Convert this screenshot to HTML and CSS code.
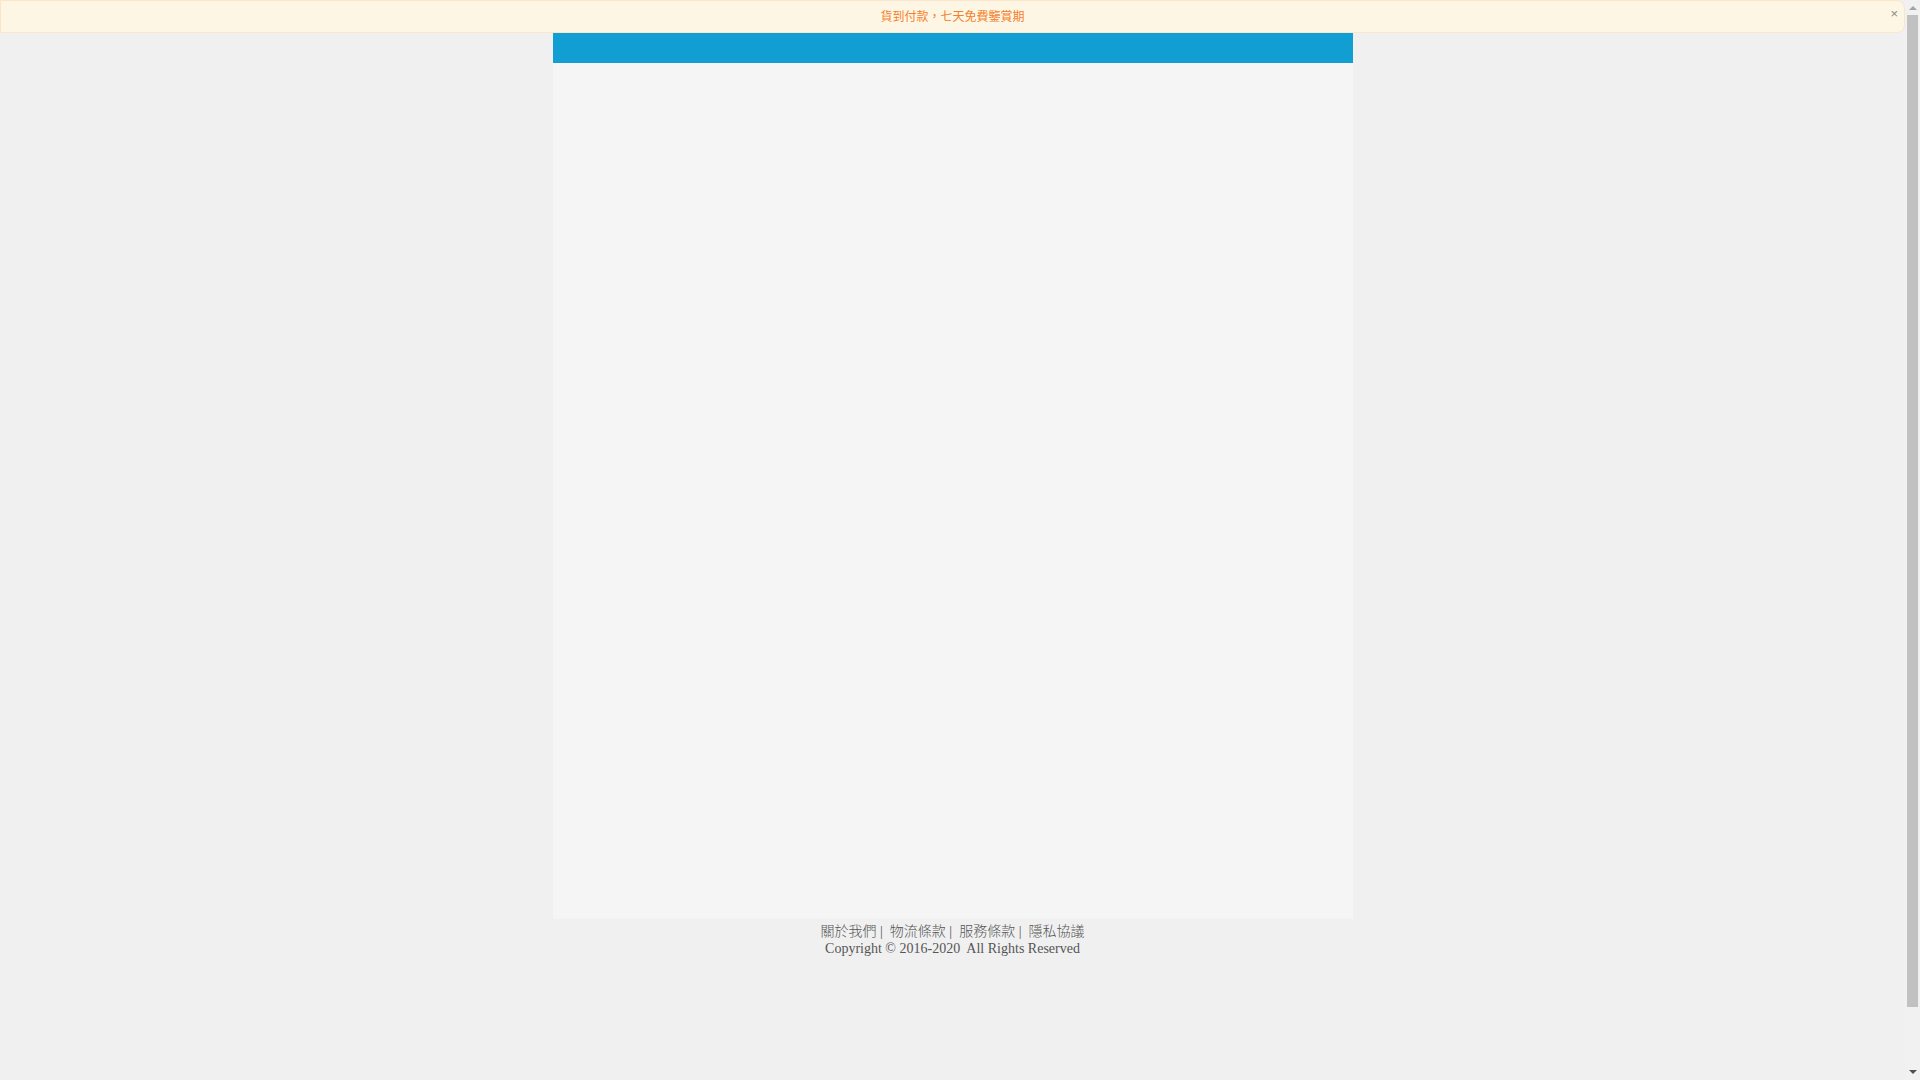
FILE: index.html
```html
<!DOCTYPE html>
<html lang="zh-Hant">
<head>
<meta charset="utf-8">
<title>貨到付款</title>
<link rel="stylesheet" href="styles.css">
</head>
<body>
<div class="notice">
  <span class="notice-text">貨到付款，七天免費鑒賞期</span>
  <span class="notice-close">×</span>
</div>
<div class="page">
  <div class="topbar"></div>
  <div class="content"></div>
</div>
<div class="footer">
  <div class="links"><a href="#">關於我們</a> | &nbsp;<a href="#">物流條款</a> | &nbsp;<a href="#">服務條款</a> | &nbsp;<a href="#">隱私協議</a></div>
  <div class="copy">Copyright © 2016-2020&nbsp; All Rights Reserved</div>
</div>
<div class="scrollbar">
  <span class="sb-arrow sb-up"></span>
  <span class="sb-thumb"></span>
  <span class="sb-arrow sb-down"></span>
</div>
</body>
</html>
```
FILE: styles.css
```css
html, body {
  margin: 0;
  padding: 0;
}
body {
  background: #f0f0f0;
  font-family: "Liberation Serif", "Noto Sans CJK TC", serif;
  margin-right: 15px;
}
.notice {
  position: relative;
  height: 31px;
  box-sizing: content-box;
  border: 1px solid #fbe6c9;
  border-radius: 0 8px 8px 0;
  background: #fef6e4;
  display: flex;
  align-items: center;
  justify-content: center;
  font-family: "Liberation Sans", "Noto Sans CJK TC", sans-serif;
}
.notice-text {
  color: #f47e2c;
  font-size: 12px;
  line-height: 14px;
  padding-top: 1px;
}
.notice-close {
  position: absolute;
  right: 6px;
  top: 5px;
  color: #888;
  font-size: 13px;
}
.page {
  width: 800px;
  margin: 0 auto;
}
.topbar {
  height: 30px;
  background: #109ed3;
}
.content {
  height: 856px;
  background: #f5f5f5;
}
.footer {
  text-align: center;
  color: #555;
  font-size: 14px;
  line-height: 17px;
  padding-top: 4px;
}
.footer .links {
  font-weight: 300;
}
.footer a {
  color: #555;
  text-decoration: none;
}
.scrollbar {
  position: fixed;
  top: 0;
  right: 0;
  width: 15px;
  height: 100%;
  background: #f1f1f1;
  display: flex;
  flex-direction: column;
  align-items: center;
}
.sb-arrow {
  width: 0;
  height: 0;
  border-left: 4px solid transparent;
  border-right: 4px solid transparent;
}
.sb-up {
  margin-top: 6px;
  border-bottom: 4px solid #a3a3a3;
}
.sb-thumb {
  width: 11px;
  margin-top: 5px;
  height: 992px;
  background: #c1c1c1;
  flex: none;
}
.sb-down {
  margin-top: auto;
  margin-bottom: 6px;
  border-top: 4px solid #505050;
}
```
